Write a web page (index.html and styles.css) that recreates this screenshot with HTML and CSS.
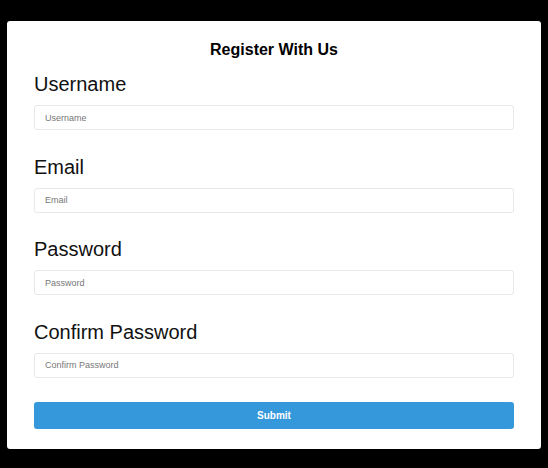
FILE: index.html
```html
<!DOCTYPE html>
<html>
<head>
<meta charset="utf-8">
<title>Register With Us</title>
<link rel="stylesheet" href="styles.css">
</head>
<body>
<form class="card">
  <h1 class="title">Register With Us</h1>
  <div class="field">
    <label class="label" for="u">Username</label>
    <input class="input" id="u" type="text" placeholder="Username">
  </div>
  <div class="field">
    <label class="label" for="e">Email</label>
    <input class="input" id="e" type="text" placeholder="Email">
  </div>
  <div class="field">
    <label class="label" for="p">Password</label>
    <input class="input" id="p" type="password" placeholder="Password">
  </div>
  <div class="field">
    <label class="label" for="c">Confirm Password</label>
    <input class="input" id="c" type="password" placeholder="Confirm Password">
  </div>
  <button class="submit" type="button">Submit</button>
</form>
</body>
</html>
```
FILE: styles.css
```css
html, body {
  margin: 0;
  padding: 0;
  background: #000;
}
body {
  padding: 21px 7px 0 7px;
  font-family: "Liberation Sans", Arial, sans-serif;
}
.card {
  box-sizing: border-box;
  width: 534px;
  height: 428px;
  background: #fff;
  border-radius: 3px;
  padding: 19px 27px 20px 27px;
  display: flex;
  flex-direction: column;
}
.title {
  margin: 0 0 14px 0;
  font-size: 16px;
  line-height: 19px;
  font-weight: bold;
  text-align: center;
  color: #000;
}
.field {
  display: flex;
  flex-direction: column;
  margin-bottom: 25.5px;
}
.field:last-of-type {
  margin-bottom: 24.5px;
}
.label {
  font-size: 20px;
  line-height: 23px;
  color: #111;
  margin-bottom: 9px;
}
.input {
  box-sizing: border-box;
  height: 25px;
  width: 100%;
  border: 1px solid #e8e8e8;
  border-radius: 3px;
  padding: 0 10px;
  font-family: "Liberation Sans", Arial, sans-serif;
  font-size: 9px;
  color: #333;
  outline: none;
  margin: 0;
}
.input::placeholder {
  color: #777;
}
.submit {
  box-sizing: border-box;
  height: 27px;
  width: 100%;
  border: none;
  border-radius: 3px;
  background: #3498db;
  color: #fff;
  font-family: "Liberation Sans", Arial, sans-serif;
  font-size: 10px;
  font-weight: bold;
  margin: 0;
  padding: 0;
}
```
